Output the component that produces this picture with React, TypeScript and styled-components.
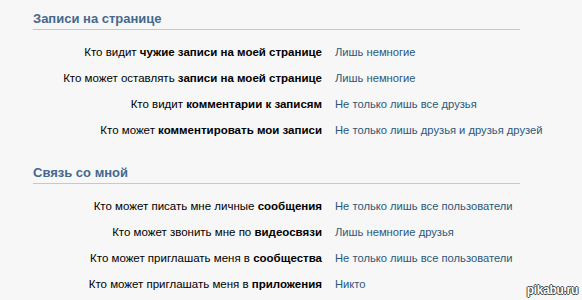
import styled, { createGlobalStyle } from "styled-components";

const GlobalStyle = createGlobalStyle`
  body {
    margin: 0;
    background: #f7f7f7;
    font-family: "Liberation Sans", Tahoma, sans-serif;
    font-size: 11.5px;
    color: #000;
  }
`;

type Setting = { pre: string; bold: string; value: string };

const sections: { title: string; rows: Setting[] }[] = [
  {
    title: "Записи на странице",
    rows: [
      { pre: "Кто видит", bold: "чужие записи на моей странице", value: "Лишь немногие" },
      { pre: "Кто может оставлять", bold: "записи на моей странице", value: "Лишь немногие" },
      { pre: "Кто видит", bold: "комментарии к записям", value: "Не только лишь все друзья" },
      { pre: "Кто может", bold: "комментировать мои записи", value: "Не только лишь друзья и друзья друзей" },
    ],
  },
  {
    title: "Связь со мной",
    rows: [
      { pre: "Кто может писать мне личные", bold: "сообщения", value: "Не только лишь все пользователи" },
      { pre: "Кто может звонить мне по", bold: "видеосвязи", value: "Лишь немногие друзья" },
      { pre: "Кто может приглашать меня в", bold: "сообщества", value: "Не только лишь все пользователи" },
      { pre: "Кто может приглашать меня в", bold: "приложения", value: "Никто" },
    ],
  },
];

export default function App() {
  return (
    <Page>
      <GlobalStyle />
      {sections.map((s) => (
        <Section key={s.title}>
          <Header>{s.title}</Header>
          <Rows>
            {s.rows.map((r, i) => (
              <Row key={i}>
                <Label>
                  {r.pre} <b>{r.bold}</b>
                </Label>
                <Value>{r.value}</Value>
              </Row>
            ))}
          </Rows>
        </Section>
      ))}
      <Watermark>pikabu.ru</Watermark>
    </Page>
  );
}

const Page = styled.div`
  position: relative;
  width: 582px;
  height: 300px;
  padding-top: 11px;
  box-sizing: border-box;
  overflow: hidden;
`;

const Section = styled.section`
  margin-bottom: 28px;
`;

const Header = styled.div`
  margin-left: 33px;
  width: 487px;
  padding: 0 0 3px 0;
  border-bottom: 1px solid #bccadc;
  color: #45688e;
  font-weight: bold;
  font-size: 13px;
  line-height: 15px;
`;

const Rows = styled.div`
  display: flex;
  flex-direction: column;
  gap: 12px;
  padding-top: 15px;
`;

const Row = styled.div`
  display: grid;
  grid-template-columns: 322px auto;
  column-gap: 13px;
  line-height: 14px;
`;

const Label = styled.div`
  text-align: right;
  white-space: nowrap;
`;

const Value = styled.div`
  color: #2b587a;
  font-size: 11.2px;
  white-space: nowrap;
`;

const Watermark = styled.div`
  position: absolute;
  right: 4px;
  bottom: 3px;
  font-size: 12px;
  font-weight: bold;
  letter-spacing: -0.3px;
  color: #fff;
  text-shadow: 1px 0 0 #444, -1px 0 0 #444, 0 1px 0 #444, 0 -1px 0 #444;
`;
